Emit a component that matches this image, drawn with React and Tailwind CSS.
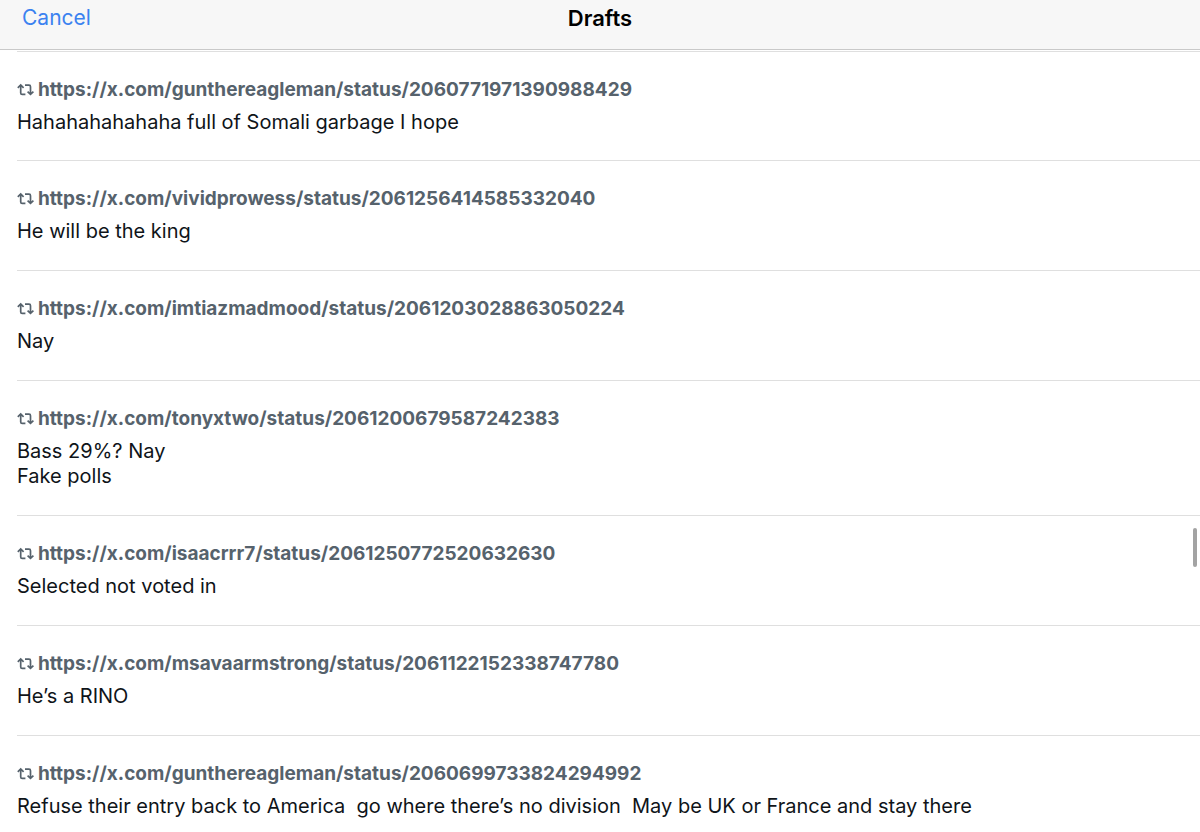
const drafts = [
  { id: 1, url: "https://x.com/gunthereagleman/status/2060771971390988429", text: "Hahahahahahaha full of Somali garbage I hope" },
  { id: 2, url: "https://x.com/vividprowess/status/2061256414585332040", text: "He will be the king" },
  { id: 3, url: "https://x.com/imtiazmadmood/status/2061203028863050224", text: "Nay" },
  { id: 4, url: "https://x.com/tonyxtwo/status/2061200679587242383", text: "Bass 29%? Nay\nFake polls" },
  { id: 5, url: "https://x.com/isaacrrr7/status/2061250772520632630", text: "Selected not voted in" },
  { id: 6, url: "https://x.com/msavaarmstrong/status/2061122152338747780", text: "He’s a RINO" },
  { id: 7, url: "https://x.com/gunthereagleman/status/2060699733824294992", text: "Refuse their entry back to America  go where there’s no division  May be UK or France and stay there" },
];

function RepostIcon() {
  return (
    <svg viewBox="0 0 17 14" className="w-[17px] h-[14px] shrink-0" fill="none" stroke="currentColor" strokeWidth="1.7" aria-hidden="true">
      <path d="M.8 4.8 3.7 2l2.9 2.8M3.7 2.4v7.5c0 .9.6 1.5 1.5 1.5h3.2" />
      <path d="M8 2.2h4c.9 0 1.5.6 1.5 1.5v7.5M10.6 8.6l2.9 2.8 2.9-2.8" />
    </svg>
  );
}

function Draft({ url, text }) {
  return (
    <li className="ml-[17px] border-t border-[#dfdfdf] pt-[26px] pb-[26px] first:pb-[25px]">
      <a href={url} className="flex items-center gap-1 text-[19px] leading-6 font-bold text-[#56626c]">
        <RepostIcon />
        {url}
      </a>
      <p className="mt-2 pr-4 text-[20px] leading-[25px] whitespace-pre-wrap text-[#0f1419]">{text}</p>
    </li>
  );
}

export default function App() {
  return (
    <div className="relative min-h-screen overflow-hidden bg-white font-['Inter',sans-serif]">
      <header className="grid grid-cols-3 items-start border-b border-[#c9c9c9] bg-[#f7f7f7] px-[22px] pt-1 pb-[17px] leading-7">
        <button type="button" className="justify-self-start text-[21px] text-[#3b82f0]">Cancel</button>
        <h1 className="text-center text-[22px] font-semibold text-black">Drafts</h1>
      </header>

      <ul className="pt-px">
        {drafts.map((d) => (
          <Draft key={d.id} url={d.url} text={d.text} />
        ))}
      </ul>

      {/* scroll indicator */}
      <div className="absolute right-[3px] top-[528px] h-[39px] w-1 rounded-full bg-[#a3a3a3]" />
    </div>
  );
}
